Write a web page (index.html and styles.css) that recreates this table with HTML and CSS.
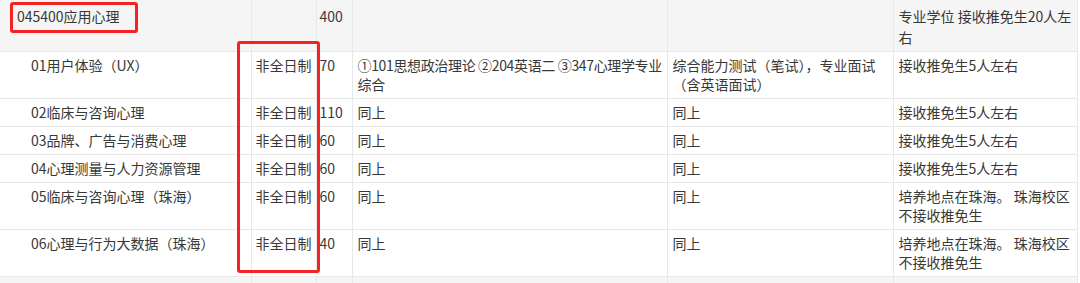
FILE: index.html
```html
<!DOCTYPE html>
<html lang="zh-CN">
<head>
<meta charset="utf-8">
<link rel="stylesheet" href="styles.css">
</head>
<body>
<div class="wrap">
<table class="grid">
  <colgroup>
    <col class="c1"><col class="c2"><col class="c3"><col class="c4"><col class="c5"><col class="c6">
  </colgroup>
  <tr class="head">
    <td class="name top">045400应用心理</td>
    <td></td>
    <td class="num">400</td>
    <td></td>
    <td></td>
    <td>专业学位 接收推免生20人左右</td>
  </tr>
  <tr class="tall">
    <td class="name sub">01用户体验（UX）</td>
    <td class="mode">非全日制</td>
    <td class="num">70</td>
    <td class="exam">①101思想政治理论 ②204英语二 ③347心理学专业综合</td>
    <td>综合能力测试（笔试），专业面试（含英语面试）</td>
    <td>接收推免生5人左右</td>
  </tr>
  <tr>
    <td class="name sub">02临床与咨询心理</td>
    <td class="mode">非全日制</td>
    <td class="num">110</td>
    <td>同上</td>
    <td>同上</td>
    <td>接收推免生5人左右</td>
  </tr>
  <tr>
    <td class="name sub">03品牌、广告与消费心理</td>
    <td class="mode">非全日制</td>
    <td class="num">60</td>
    <td>同上</td>
    <td>同上</td>
    <td>接收推免生5人左右</td>
  </tr>
  <tr>
    <td class="name sub">04心理测量与人力资源管理</td>
    <td class="mode">非全日制</td>
    <td class="num">60</td>
    <td>同上</td>
    <td>同上</td>
    <td>接收推免生5人左右</td>
  </tr>
  <tr class="tall">
    <td class="name sub">05临床与咨询心理（珠海）</td>
    <td class="mode">非全日制</td>
    <td class="num">60</td>
    <td>同上</td>
    <td>同上</td>
    <td>培养地点在珠海。 珠海校区不接收推免生</td>
  </tr>
  <tr class="tall">
    <td class="name sub">06心理与行为大数据（珠海）</td>
    <td class="mode">非全日制</td>
    <td class="num">40</td>
    <td>同上</td>
    <td>同上</td>
    <td>培养地点在珠海。 珠海校区不接收推免生</td>
  </tr>
  <tr class="foot">
    <td></td><td></td><td></td><td></td><td></td><td></td>
  </tr>
</table>
<div class="mark mark-code"></div>
<div class="mark mark-mode"></div>
</div>
</body>
</html>
```
FILE: styles.css
```css
html, body {
  margin: 0;
  padding: 0;
  background: #ffffff;
}
body {
  font-family: "Noto Sans CJK SC", "Microsoft YaHei", sans-serif;
  font-size: 14px;
  color: #383838;
  overflow: hidden;
}
.wrap {
  position: relative;
  width: 1080px;
  height: 283px;
  overflow: hidden;
}
.grid {
  border-collapse: collapse;
  table-layout: fixed;
  width: 1077px;
}
.c1 { width: 251px; }
.c2 { width: 65px; }
.c3 { width: 36px; }
.c4 { width: 315px; }
.c5 { width: 226px; }
.c6 { width: 184px; }
.grid td {
  border: 1px solid #e8e8e8;
  padding: 4px 5px 4px 5px;
  line-height: 19px;
  vertical-align: top;
  word-break: break-all;
}
.grid tr td:first-child { border-left: none; }
.grid tr:first-child td { border-top: none; }
.head td {
  background: #f5f5f5;
  height: 40px;
  padding-top: 6px;
  padding-bottom: 3px;
  line-height: 21px;
}
.grid td.top { padding-left: 17px; }
.grid td.sub { padding-left: 31px; }
.grid td.num { padding-left: 3px; padding-right: 0; }
.grid td.mode {
  padding-left: 4px;
  padding-right: 0;
  white-space: nowrap;
}
.grid td.exam {
  padding-right: 0;
  letter-spacing: -0.35px;
}
.tall td { height: 38px; }
.foot td {
  background: #f5f5f5;
  height: 20px;
}
.mark {
  position: absolute;
  border: 3px solid #f52222;
  border-radius: 3px;
  box-sizing: border-box;
}
.mark-code {
  left: 10px;
  top: 2px;
  width: 128px;
  height: 31px;
}
.mark-mode {
  left: 237px;
  top: 41px;
  width: 83px;
  height: 232px;
}
```
